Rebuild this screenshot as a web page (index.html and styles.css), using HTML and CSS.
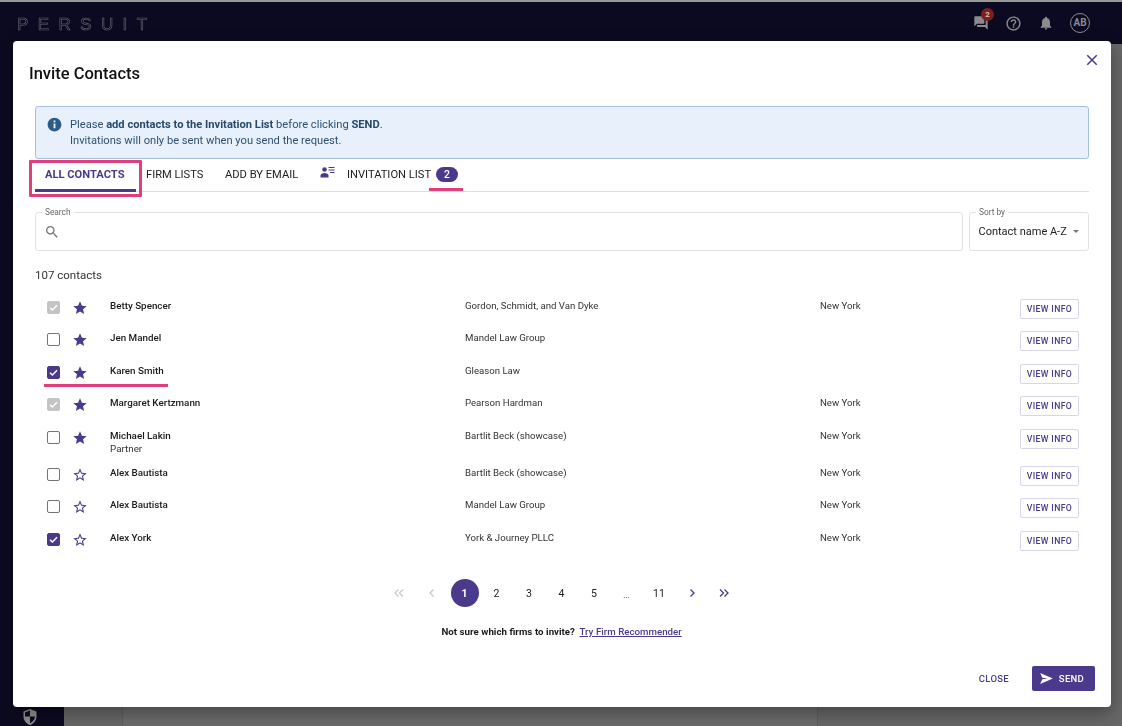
FILE: index.html
```html
<!DOCTYPE html>
<html lang="en">
<head>
<meta charset="utf-8">
<title>Invite Contacts</title>
<link rel="stylesheet" href="styles.css">
</head>
<body>
<div class="page">
  <header class="topbar">
    <span class="logo">PERSUIT</span>
    <div class="top-icons">
      <span class="chat">
        <svg width="16" height="16" viewBox="0 0 24 24"><path fill="#8b8b8b" d="M21 6h-2v9H6v2c0 .55.45 1 1 1h11l4 4V7c0-.55-.45-1-1-1zm-4 6V3c0-.55-.45-1-1-1H3c-.55 0-1 .45-1 1v14l4-4h10c.55 0 1-.45 1-1z"/></svg>
        <span class="chat-badge">2</span>
      </span>
      <svg class="ic-help" width="17" height="17" viewBox="0 0 24 24"><path fill="#8b8b8b" d="M11 18h2v-2h-2v2zm1-16C6.48 2 2 6.48 2 12s4.48 10 10 10 10-4.48 10-10S17.52 2 12 2zm0 18c-4.41 0-8-3.59-8-8s3.59-8 8-8 8 3.59 8 8-3.59 8-8 8zm0-14c-2.21 0-4 1.79-4 4h2c0-1.1.9-2 2-2s2 .9 2 2c0 2-3 1.75-3 5h2c0-2.25 3-2.5 3-5 0-2.21-1.79-4-4-4z"/></svg>
      <svg class="ic-bell" width="16" height="16" viewBox="0 0 24 24"><path fill="#8b8b8b" d="M12 22c1.1 0 2-.9 2-2h-4c0 1.1.9 2 2 2zm6-6v-5c0-3.07-1.63-5.64-4.5-6.32V4c0-.83-.67-1.5-1.5-1.5s-1.5.67-1.5 1.5v.68C7.64 5.36 6 7.92 6 11v5l-2 2v1h16v-1l-2-2z"/></svg>
      <span class="avatar">AB</span>
    </div>
  </header>
  <div class="under">
    <aside class="rail">
      <svg class="shield" width="14" height="16" viewBox="0 0 14 16"><path fill="#8f8f8f" d="M7 0 13.5 2.4V7.5C13.5 11.4 10.8 14.6 7 16 3.2 14.6.5 11.4.5 7.5V2.4Z"/><path fill="#0c0a20" d="M7 1.6V7.5H2V3.4ZM7 7.5H12C11.8 10.6 9.8 13 7 14.3Z"/></svg>
    </aside>
    <main class="backdrop"><div class="backdrop-col"></div></main>
  </div>
</div>

<section class="modal">
  <svg class="close-x" width="18" height="18" viewBox="0 0 24 24"><path fill="#4b3a8c" d="M19 6.41 17.59 5 12 10.59 6.41 5 5 6.41 10.59 12 5 17.59 6.41 19 12 13.41 17.59 19 19 17.59 13.41 12z"/></svg>
  <h1 class="title">Invite Contacts</h1>

  <div class="alert">
    <svg class="alert-ic" width="15" height="15" viewBox="0 0 24 24"><path fill="#2c5b86" d="M12 1C5.9 1 1 5.9 1 12s4.9 11 11 11 11-4.900 11-11S18.100 1 12 1zm1.500 17h-3v-7.500h3V18zm0-9.500h-3v-3h3v3z"/></svg>
    <div>
      <p>Please <b>add contacts to the Invitation List</b> before clicking <b>SEND</b>.</p>
      <p>Invitations will only be sent when you send the request.</p>
    </div>
  </div>

  <nav class="tabs">
    <span class="tab tab-active">ALL CONTACTS</span>
    <span class="tab tab-firm">FIRM LISTS</span>
    <span class="tab tab-email">ADD BY EMAIL</span>
    <span class="tab tab-inv">
      <svg width="15" height="15" viewBox="0 0 15 15"><circle cx="4.500" cy="4.500" r="2.300" fill="#4b3a8c"/><path fill="#4b3a8c" d="M.5 12.500V10.500C.5 9 2.500 8 4.500 8s4 1 4 2.500v2z"/><path stroke="#4b3a8c" stroke-width="1.100" d="M8.500 2.500h6M8.500 5h6M10 7.500h4.500"/></svg>
      <span class="inv-label">INVITATION LIST</span>
      <span class="count">2</span>
    </span>
    <span class="mark-box"></span>
    <span class="mark-count"></span>
  </nav>

  <div class="filters">
    <div class="field field-search">
      <span class="legend">Search</span>
      <svg width="16" height="16" viewBox="0 0 24 24"><path fill="#757575" d="M15.500 14h-.79l-.28-.27C15.410 12.590 16 11.110 16 9.500 16 5.910 13.090 3 9.500 3S3 5.910 3 9.500 5.910 16 9.500 16c1.610 0 3.090-.59 4.230-1.570l.27.28v.79l5 4.990L20.490 19l-4.990-5zm-6 0C7.010 14 5 11.990 5 9.500S7.010 5 9.500 5 14 7.010 14 9.500 11.990 14 9.500 14z"/></svg>
    </div>
    <div class="field field-sort">
      <span class="legend">Sort by</span>
      <span class="sort-value">Contact name A-Z</span>
      <span class="caret"></span>
    </div>
  </div>

  <div class="total">107 contacts</div>

  <div class="rows">
    <div class="row"><span class="cb cb-dis"><svg viewBox="0 0 14 14"><path d="M2.500 7.200 5.600 10.300 11.500 4"/></svg></span><svg class="star" viewBox="0 0 24 24"><path d="M12 17.270 18.180 21l-1.640-7.030L22 9.240l-7.190-.61L12 2 9.190 8.630 2 9.240l5.460 4.730L5.820 21z"/></svg><div class="name">Betty Spencer</div><div class="firm">Gordon, Schmidt, and Van Dyke</div><div class="city">New York</div><span class="info">VIEW INFO</span></div>
    <div class="row"><span class="cb"></span><svg class="star" viewBox="0 0 24 24"><path d="M12 17.270 18.180 21l-1.640-7.030L22 9.240l-7.190-.61L12 2 9.190 8.630 2 9.240l5.460 4.730L5.820 21z"/></svg><div class="name">Jen Mandel</div><div class="firm">Mandel Law Group</div><div class="city"></div><span class="info">VIEW INFO</span></div>
    <div class="row row-mark"><span class="cb cb-on"><svg viewBox="0 0 14 14"><path d="M2.500 7.200 5.600 10.300 11.500 4"/></svg></span><svg class="star" viewBox="0 0 24 24"><path d="M12 17.270 18.180 21l-1.640-7.030L22 9.240l-7.190-.61L12 2 9.190 8.630 2 9.240l5.460 4.730L5.820 21z"/></svg><div class="name">Karen Smith</div><div class="firm">Gleason Law</div><div class="city"></div><span class="info">VIEW INFO</span></div>
    <div class="row"><span class="cb cb-dis"><svg viewBox="0 0 14 14"><path d="M2.500 7.200 5.600 10.300 11.500 4"/></svg></span><svg class="star" viewBox="0 0 24 24"><path d="M12 17.270 18.180 21l-1.640-7.030L22 9.240l-7.190-.61L12 2 9.190 8.630 2 9.240l5.460 4.730L5.820 21z"/></svg><div class="name">Margaret Kertzmann</div><div class="firm">Pearson Hardman</div><div class="city">New York</div><span class="info">VIEW INFO</span></div>
    <div class="row row-tall"><span class="cb"></span><svg class="star" viewBox="0 0 24 24"><path d="M12 17.270 18.180 21l-1.640-7.030L22 9.240l-7.190-.61L12 2 9.190 8.630 2 9.240l5.460 4.730L5.820 21z"/></svg><div class="name">Michael Lakin<small>Partner</small></div><div class="firm">Bartlit Beck (showcase)</div><div class="city">New York</div><span class="info">VIEW INFO</span></div>
    <div class="row"><span class="cb"></span><svg class="star star-o" viewBox="0 0 24 24"><path d="M22 9.240l-7.190-.62L12 2 9.190 8.630 2 9.240l5.460 4.730L5.820 21 12 17.270 18.180 21l-1.630-7.030L22 9.240zM12 15.400l-3.760 2.270 1-4.280-3.320-2.880 4.380-.38L12 6.100l1.710 4.040 4.380.38-3.320 2.880 1 4.280L12 15.400z"/></svg><div class="name">Alex Bautista</div><div class="firm">Bartlit Beck (showcase)</div><div class="city">New York</div><span class="info">VIEW INFO</span></div>
    <div class="row"><span class="cb"></span><svg class="star star-o" viewBox="0 0 24 24"><path d="M22 9.240l-7.190-.62L12 2 9.190 8.630 2 9.240l5.460 4.730L5.820 21 12 17.270 18.180 21l-1.630-7.030L22 9.240zM12 15.400l-3.760 2.270 1-4.280-3.320-2.880 4.380-.38L12 6.100l1.710 4.040 4.380.38-3.320 2.880 1 4.280L12 15.400z"/></svg><div class="name">Alex Bautista</div><div class="firm">Mandel Law Group</div><div class="city">New York</div><span class="info">VIEW INFO</span></div>
    <div class="row"><span class="cb cb-on"><svg viewBox="0 0 14 14"><path d="M2.500 7.200 5.600 10.300 11.500 4"/></svg></span><svg class="star star-o" viewBox="0 0 24 24"><path d="M22 9.240l-7.190-.62L12 2 9.190 8.630 2 9.240l5.460 4.730L5.820 21 12 17.270 18.180 21l-1.630-7.030L22 9.240zM12 15.400l-3.760 2.270 1-4.280-3.320-2.880 4.380-.38L12 6.100l1.710 4.040 4.380.38-3.320 2.880 1 4.280L12 15.400z"/></svg><div class="name">Alex York</div><div class="firm">York &amp; Journey PLLC</div><div class="city">New York</div><span class="info">VIEW INFO</span></div>
  </div>

  <div class="pager">
    <span class="pg pg-off"><svg viewBox="0 0 12 12"><path d="M5.500 2.500 2 6l3.500 3.500M10 2.500 6.500 6l3.500 3.500"/></svg></span>
    <span class="pg pg-off"><svg viewBox="0 0 12 12"><path d="M7.500 2.500 4 6l3.500 3.500"/></svg></span>
    <span class="pg pg-cur">1</span>
    <span class="pg">2</span>
    <span class="pg">3</span>
    <span class="pg">4</span>
    <span class="pg">5</span>
    <span class="pg pg-dots">...</span>
    <span class="pg">11</span>
    <span class="pg pg-nav"><svg viewBox="0 0 12 12"><path d="M4.500 2.500 8 6l-3.500 3.500"/></svg></span>
    <span class="pg pg-nav"><svg viewBox="0 0 12 12"><path d="M2 2.500 5.500 6 2 9.500M6.500 2.500 10 6l-3.500 3.500"/></svg></span>
  </div>

  <p class="recommend">Not sure which firms to invite? <a>Try Firm Recommender</a></p>

  <footer class="actions">
    <span class="btn-close">CLOSE</span>
    <span class="btn-send">
      <svg width="13" height="11" viewBox="0 0 15 13"><path fill="#fff" d="M0 0 15 6.500 0 13 2.500 7.500 9 6.500 2.500 5.500Z"/></svg>
      SEND
    </span>
  </footer>
</section>
</body>
</html>
```

FILE: styles.css
```css
* { box-sizing: border-box; }
html, body { margin: 0; height: 100%; overflow: hidden; }
body { font-family: Roboto, "Liberation Sans", sans-serif; color: #1a1a1a; background: #666; }
p, h1 { margin: 0; }

.page { height: 726px; display: flex; flex-direction: column; border-top: 2px solid #9a9a9a; }
.topbar { height: 42px; background: #0c0a20; display: flex; align-items: flex-start; justify-content: space-between; padding: 13px 32px 0 17px; }
.logo { font: 400 17px/19px "Liberation Sans", sans-serif; letter-spacing: 9.400px; color: #0c0a20; -webkit-text-stroke: .6px #6a6a72; will-change: transform; }
.top-icons { display: flex; align-items: center; height: 18px; margin-top: -1px; }
.chat { position: relative; display: flex; margin-right: 16px; }
.chat-badge { position: absolute; left: 8px; top: -7px; width: 13px; height: 13px; border-radius: 50%; background: #7d1f1f; color: #c9c0c0; font: 700 8px/13px Roboto, sans-serif; text-align: center; }
.ic-help { margin-right: 16px; }
.ic-bell { margin-right: 16px; }
.avatar { width: 20px; height: 20px; border: 1px solid #8b8b8b; border-radius: 50%; color: #8b8b8b; font: 700 10px/18px Roboto, sans-serif; text-align: center; }

.under { flex: 1; display: flex; min-height: 0; }
.rail { width: 64px; background: #0c0a20; display: flex; align-items: flex-end; justify-content: center; padding-bottom: 1px; }
.shield { margin-left: -4px; }
.backdrop { flex: 1; background: #676767; padding-left: 58px; }
.backdrop-col { height: 100%; width: 696px; border-left: 1px solid #5f5f5f; border-right: 1px solid #5f5f5f; background: #6b6b6b; }

.modal { position: absolute; left: 13px; top: 41px; width: 1098px; height: 666px; background: #fff; border-radius: 4px; box-shadow: 0 6px 18px rgba(0,0,0,.35); padding: 0 22px; display: flex; flex-direction: column; }
.close-x { position: absolute; right: 10px; top: 10px; }
.title { font-size: 16.500px; font-weight: 500; line-height: 20px; margin: 23px 0 0 -6px; color: #111; }

.alert { margin-top: 22px; height: 53px; background: #e8f1fb; border: 1px solid #a5c0d8; border-radius: 3px; padding: 10px 12px 0 11px; display: flex; gap: 8px; color: #2c5070; font-size: 11.150px; line-height: 16px; }
.alert-ic { margin-top: 0; flex: none; }
.alert b { font-weight: 700; color: #264a6b; }

.tabs { position: relative; height: 33px; display: flex; align-items: center; border-bottom: 1px solid #dedede; font-size: 11.150px; padding-bottom: 2px; }
.tab { color: #222; white-space: nowrap; }
.tab-active { width: 111px; padding-left: 10px; color: #4b3a8c; font-weight: 700; }
.tab-firm { width: 79px; }
.tab-email { width: 95px; }
.tab-inv { display: flex; align-items: center; }
.tab-inv svg { margin-top: -4px; }
.inv-label { margin-left: 12px; }
.count { margin-left: 5px; width: 22px; height: 15px; border-radius: 8px; background: #4b3a8c; color: #fff; font: 500 10.500px/15px Roboto, sans-serif; text-align: center; }
.mark-box { position: absolute; left: -6px; top: 1px; width: 113px; height: 37px; border: 3px solid #df3f7d; border-radius: 1px; }
.mark-box::after { content: ""; position: absolute; left: 3px; right: 3px; bottom: 2px; height: 3px; background: #4b3a8c; }
.mark-count { position: absolute; left: 394px; top: 29px; width: 34px; height: 3px; background: #df3f7d; }

.filters { display: flex; gap: 6px; margin-top: 20px; }
.field { position: relative; height: 39px; border: 1px solid #e2e2e2; border-radius: 3px; display: flex; align-items: center; }
.field-search { flex: 1; padding-left: 8px; }
.field-sort { width: 120px; padding-left: 8.500px; font-size: 11px; color: #222; }
.legend { position: absolute; left: 6px; top: -5px; padding: 0 3px; background: #fff; font-size: 8.300px; line-height: 9px; color: #666; }
.sort-value { white-space: nowrap; }
.caret { margin-left: 6px; border: 3.500px solid transparent; border-top: 3.500px solid #777; border-bottom: 0; }

.total { margin-top: 17px; font-size: 11.500px; line-height: 14px; color: #333; }

.rows { margin-top: 11px; }
.row { height: 32.500px; display: grid; grid-template-columns: 27px 36px 355px 355px 1fr auto; padding: 5px 10px 0 12px; position: relative; }
.row-tall { height: 37px; }
.row-mark::after { content: ""; position: absolute; left: 9px; top: 26px; width: 124px; height: 3px; background: #df3f7d; }
.cb { width: 13px; height: 13px; margin-top: 2.500px; border: 1.500px solid #757575; border-radius: 2px; display: flex; }
.cb svg { width: 100%; height: 100%; fill: none; stroke: #fff; stroke-width: 1.800; }
.cb-on { background: #4b3a8c; border-color: #4b3a8c; }
.cb-dis { background: #c4c4c4; border-color: #c4c4c4; }
.star { width: 16px; height: 16px; margin: 1.500px 0 0 -2px; fill: #4b3a8c; }
.name { font-size: 9.800px; font-weight: 500; line-height: 12px; margin-top: 1.500px; color: #1a1a1a; }
.name small { display: block; font-size: 9.800px; font-weight: 400; line-height: 13px; margin-top: 0; color: #333; }
.firm, .city { font-size: 9.650px; line-height: 12px; margin-top: 1.500px; color: #333; }
.info { width: 59px; height: 20px; margin-top: .5px; border: 1px solid #d9d5ea; border-radius: 2px; color: #4b3a8c; font-size: 8.700px; font-weight: 500; line-height: 18px; letter-spacing: .35px; text-align: center; }

.pager { display: flex; justify-content: center; margin-top: 21.500px; padding-right: 1px; }
.pg { width: 32.500px; height: 28px; display: flex; align-items: center; justify-content: center; font-size: 10.500px; color: #222; }
.pg svg { width: 12px; height: 12px; fill: none; stroke: #4b3a8c; stroke-width: 1.300; }
.pg-off svg { stroke: #c9c9c9; }
.pg-cur { width: 28px; margin: 0 1.750px 0 2.750px; border-radius: 50%; background: #4b3a8c; color: #fff; font-weight: 700; }
.pg-dots { padding-top: 4px; font-size: 8px; }

.recommend { margin-top: 19px; text-align: center; font-size: 9.700px; line-height: 12px; font-weight: 700; color: #1a1a1a; padding-right: 1px; word-spacing: .2px; }
.recommend a { margin-left: 2px; color: #4b3a8c; text-decoration: underline; font-weight: 500; }

.actions { margin-top: auto; margin-bottom: 16px; margin-right: -6px; display: flex; justify-content: flex-end; align-items: center; gap: 23px; }
.btn-close { color: #4b3a8c; font-size: 9.500px; font-weight: 500; letter-spacing: .3px; }
.btn-send { width: 63px; height: 25px; padding-right: 3px; background: #4b3a8c; border-radius: 2px; color: #fff; font-size: 9.500px; font-weight: 500; letter-spacing: .3px; display: flex; align-items: center; justify-content: center; gap: 6px; }
```
